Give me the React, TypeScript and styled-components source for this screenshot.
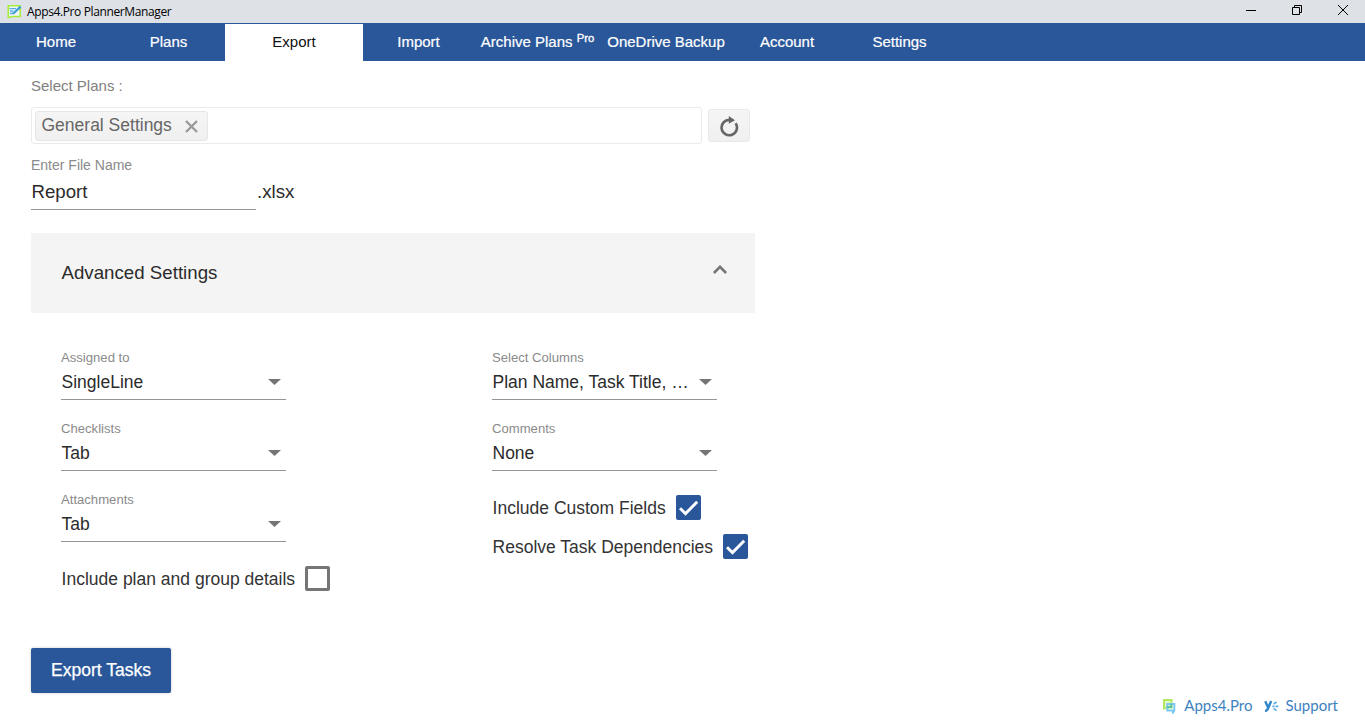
import React from "react";
import styled, { createGlobalStyle } from "styled-components";

const BLUE = "#2a579a";

const GlobalStyle = createGlobalStyle`
  * { box-sizing: border-box; }
  body {
    margin: 0;
    background: #fff;
    font-family: "Liberation Sans", Arial, sans-serif;
    color: #333;
  }
`;

const Window = styled.div`
  width: 100%;
  height: 722px;
  display: flex;
  flex-direction: column;
  overflow: hidden;
`;

const TitleBar = styled.header`
  height: 23px;
  flex: none;
  display: flex;
  align-items: center;
  background: #dee1e6;
  padding: 0 16px 0 7px;
`;

const WindowTitle = styled.span`
  flex: 1;
  margin-left: 5px;
  font: 12px/23px "Open Sans", sans-serif;
  letter-spacing: -0.38px;
  color: #000;
`;

const WindowControls = styled.div`
  display: flex;
  align-items: center;
  gap: 35px;
  height: 20px;
  margin-bottom: 3px;
  svg { display: block; }
`;

const NavBar = styled.nav`
  height: 38px;
  flex: none;
  display: flex;
  align-items: flex-end;
  background: ${BLUE};
`;

const NavItem = styled.a<{ $width: number; $active?: boolean }>`
  width: ${(p) => p.$width}px;
  height: 37px;
  font-size: 15px;
  line-height: 36px;
  text-align: center;
  white-space: nowrap;
  color: ${(p) => (p.$active ? "#111" : "#fff")};
  background: ${(p) => (p.$active ? "#fff" : "transparent")};
  -webkit-text-stroke: ${(p) => (p.$active ? "0" : "0.2px #fff")};
  sup {
    font-size: 11.25px;
    line-height: 0;
    vertical-align: 5px;
    -webkit-text-stroke: 0.35px #fff;
  }
`;

const Main = styled.main`
  flex: 1;
  min-height: 0;
  width: 755px;
  padding: 14px 0 0 31px;
  display: flex;
  flex-direction: column;
  align-items: flex-start;
  > * { flex-shrink: 0; }
`;

const PlansLabel = styled.label`
  font-size: 15px;
  line-height: 22px;
  color: #808080;
`;

const PlansRow = styled.div`
  display: flex;
  align-items: center;
  gap: 6px;
  margin-top: 10px;
`;

const TagBox = styled.div`
  width: 671px;
  height: 37px;
  padding: 3px;
  border: 1px solid #ebebeb;
  border-radius: 3px;
`;

const Tag = styled.div`
  width: 173px;
  height: 30px;
  padding: 0 9px 0 5.5px;
  display: flex;
  align-items: center;
  justify-content: space-between;
  border: 1px solid #e6e6e6;
  border-radius: 3px;
  background: linear-gradient(#f5f5f5, #f0f0f0);
  color: #666;
  font-size: 17.5px;
  line-height: 27px;
  white-space: nowrap;
  span { height: 28px; }
  svg { margin-top: 1px; }
`;

const RefreshButton = styled.button`
  width: 42px;
  height: 33px;
  padding: 0;
  display: flex;
  align-items: center;
  justify-content: center;
  border: 1px solid #e9e9e9;
  border-radius: 3px;
  background: linear-gradient(#f5f5f5, #f0f0f0);
`;

const FileLabel = styled.label`
  margin-top: 12px;
  font-size: 14px;
  line-height: 18px;
  color: #8a8a8a;
`;

const FileRow = styled.div`
  display: flex;
  font-size: 18.67px;
  line-height: 36px;
  color: #2b2b2b;
`;

const FileName = styled.div`
  width: 225px;
  height: 36px;
  padding-left: 0.5px;
  border-bottom: 1px solid #949494;
  margin-right: 1px;
`;

const PanelHeader = styled.section`
  width: 724px;
  height: 80px;
  margin-top: 23px;
  padding: 0 28px 0 30.5px;
  display: flex;
  align-items: center;
  justify-content: space-between;
  background: #f4f4f4;
  font-size: 18.67px;
  letter-spacing: 0.02px;
  color: #2b2b2b;
  svg { margin-top: -7px; }
`;

const PanelBody = styled.section`
  display: grid;
  grid-template-columns: 431px auto;
  padding: 35px 0 0 30px;
`;

const Column = styled.div`
  display: flex;
  flex-direction: column;
  align-items: flex-start;
`;

const Field = styled.div`
  width: 225px;
  height: 52px;
  margin-bottom: 19px;
  border-bottom: 1px solid #949494;
`;

const FieldLabel = styled.div`
  padding-top: 1px;
  font-size: 13.125px;
  line-height: 18px;
  color: #8a8a8a;
`;

const FieldValue = styled.div`
  display: flex;
  align-items: center;
  justify-content: space-between;
  padding: 0 5px 0 0.5px;
  font-size: 17.5px;
  line-height: 30px;
  color: #2b2b2b;
  white-space: nowrap;
`;

const CheckRow = styled.label<{ $top: number }>`
  display: flex;
  align-items: center;
  height: 25px;
  margin-top: ${(p) => p.$top}px;
  padding-left: 0.6px;
  gap: 10px;
  font-size: 17.5px;
  line-height: 27px;
  color: #333;
  white-space: nowrap;
`;

const CheckLabel = styled.span`
  padding-top: 2px;
`;

const CheckBox = styled.span<{ $on?: boolean }>`
  width: 25px;
  height: 25px;
  display: flex;
  align-items: center;
  justify-content: center;
  border-radius: 2px;
  border: ${(p) => (p.$on ? "0" : "3px solid #757575")};
  background: ${(p) => (p.$on ? BLUE : "#fff")};
`;

const ExportButton = styled.button`
  width: 140px;
  height: 45px;
  margin-top: 57px;
  padding: 0 0 1px;
  border: 0;
  border-radius: 2px;
  background: ${BLUE};
  box-shadow: 0 0 3px rgba(0, 0, 0, 0.2);
  color: #fff;
  font: 17.5px "Liberation Sans", Arial, sans-serif;
  -webkit-text-stroke: 0.25px #fff;
  white-space: nowrap;
`;

const Footer = styled.footer`
  height: 33px;
  flex: none;
  display: flex;
  justify-content: flex-end;
  gap: 12px;
  padding-right: 27px;
`;

const FooterLink = styled.a<{ $gap: number }>`
  display: flex;
  align-items: center;
  height: 33px;
  gap: ${(p) => p.$gap}px;
  font: 15px/33px Lato, sans-serif;
  color: #3d82c0;
`;

const Caret = () => (
  <svg width="13" height="6" viewBox="0 0 13 6">
    <path d="M0 0h13L6.5 6z" fill="#757575" />
  </svg>
);

const Tick = () => (
  <svg width="25" height="25" viewBox="0 0 25 25" fill="none" stroke="#fff" strokeWidth="2.9">
    <path d="M4 13.3l5.5 5.3L21.2 6.8" />
  </svg>
);

const SelectField = ({ label, value }: { label: string; value: string }) => (
  <Field>
    <FieldLabel>{label}</FieldLabel>
    <FieldValue>
      {value}
      <Caret />
    </FieldValue>
  </Field>
);

const CheckField = ({ label, on, top = 0 }: { label: string; on?: boolean; top?: number }) => (
  <CheckRow $top={top}>
    <CheckLabel>{label}</CheckLabel>
    <CheckBox $on={on}>{on && <Tick />}</CheckBox>
  </CheckRow>
);

const AppIcon = () => (
  <svg width="15" height="15" viewBox="0 0 15 15" fill="none">
    <path d="M1.3 1.8h11.9v10.7H5.5L1.3 13.5z" fill="#f0f6f6" stroke="#a6ec3a" strokeWidth="1.6" />
    <path d="M2.5 4.6h6.5M3 7h3.2M3 9.5h3" stroke="#55aee0" strokeWidth="1.3" />
    <path d="M6 9.8L13.6 2.6" stroke="#3f9bd6" strokeWidth="2.2" />
  </svg>
);

const BrandIcon = () => (
  <svg width="14" height="16" viewBox="0 0 14 16" fill="none">
    <path d="M2 2h7.5v7.5H4.4L2 10.5z" fill="#e6f8c8" stroke="#b0e860" strokeWidth="2" />
    <path d="M5.3 6h7v6.6L11 14.5v-1.9H5.3z" stroke="#7cc9f0" strokeWidth="2" />
    <path d="M5 9.2h4.3V6" stroke="#55bfa8" strokeWidth="1.7" />
  </svg>
);

const SupportIcon = () => (
  <svg width="15" height="14" viewBox="0 0 15 14" fill="none">
    <path d="M1.2 2.2l2.8 6M7.2 2L4 9.5Q3.2 12 1 11.8" stroke="#2f86c9" strokeWidth="2.4" />
    <path d="M9.6 5l3-2M8.4 7.3h2.2M11.6 7.3h2.8M9.6 9.4l3 2.2" stroke="#5aaee2" strokeWidth="1.7" />
  </svg>
);

export default function App() {
  return (
    <Window>
      <GlobalStyle />
      <TitleBar>
        <AppIcon />
        <WindowTitle>Apps4.Pro PlannerManager</WindowTitle>
        <WindowControls>
          <svg width="12" height="12" viewBox="0 0 12 12">
            <path d="M2 6.5h10" stroke="#000" />
          </svg>
          <svg width="11" height="12" viewBox="0 0 11 12" fill="none" stroke="#000">
            <path d="M1.5 3.5h7v7h-7zM3.5 3.5v-2h7v7h-2" />
          </svg>
          <svg width="12" height="12" viewBox="0 0 12 12" stroke="#000">
            <path d="M1 1l10 10M11 1L1 11" />
          </svg>
        </WindowControls>
      </TitleBar>
      <NavBar>
        <NavItem $width={112}>Home</NavItem>
        <NavItem $width={113}>Plans</NavItem>
        <NavItem $width={138} $active>Export</NavItem>
        <NavItem $width={111}>Import</NavItem>
        <NavItem $width={127}>Archive Plans <sup>Pro</sup></NavItem>
        <NavItem $width={130}>OneDrive Backup</NavItem>
        <NavItem $width={112}>Account</NavItem>
        <NavItem $width={113}>Settings</NavItem>
      </NavBar>
      <Main>
        <PlansLabel>Select Plans :</PlansLabel>
        <PlansRow>
          <TagBox>
            <Tag>
              <span>General Settings</span>
              <svg width="13" height="13" viewBox="0 0 13 13" stroke="#999" strokeWidth="2.3">
                <path d="M1 1l11 11M12 1L1 12" />
              </svg>
            </Tag>
          </TagBox>
          <RefreshButton aria-label="Refresh">
            <svg width="20" height="22" viewBox="0 0 20 22" fill="none">
              <path d="M16.6 8.2A7.7 7.7 0 1 1 11 4.9" stroke="#666" strokeWidth="2.6" />
              <path d="M9.8 1l6.2 4.2-6.2 3.5z" fill="#666" />
            </svg>
          </RefreshButton>
        </PlansRow>
        <FileLabel>Enter File Name</FileLabel>
        <FileRow>
          <FileName>Report</FileName>
          <span>.xlsx</span>
        </FileRow>
        <PanelHeader>
          Advanced Settings
          <svg width="14" height="9" viewBox="0 0 14 9" fill="none" stroke="#757575" strokeWidth="2.6">
            <path d="M.9 8L7 1.8 13.1 8" />
          </svg>
        </PanelHeader>
        <PanelBody>
          <Column>
            <SelectField label="Assigned to" value="SingleLine" />
            <SelectField label="Checklists" value="Tab" />
            <SelectField label="Attachments" value="Tab" />
            <CheckField label="Include plan and group details" top={5} />
          </Column>
          <Column>
            <SelectField label="Select Columns" value="Plan Name, Task Title, …" />
            <SelectField label="Comments" value="None" />
            <CheckField label="Include Custom Fields" on top={5} />
            <CheckField label="Resolve Task Dependencies" on top={14} />
          </Column>
        </PanelBody>
        <ExportButton>Export Tasks</ExportButton>
      </Main>
      <Footer>
        <FooterLink $gap={8}><BrandIcon />Apps4.Pro</FooterLink>
        <FooterLink $gap={6}><SupportIcon />Support</FooterLink>
      </Footer>
    </Window>
  );
}
